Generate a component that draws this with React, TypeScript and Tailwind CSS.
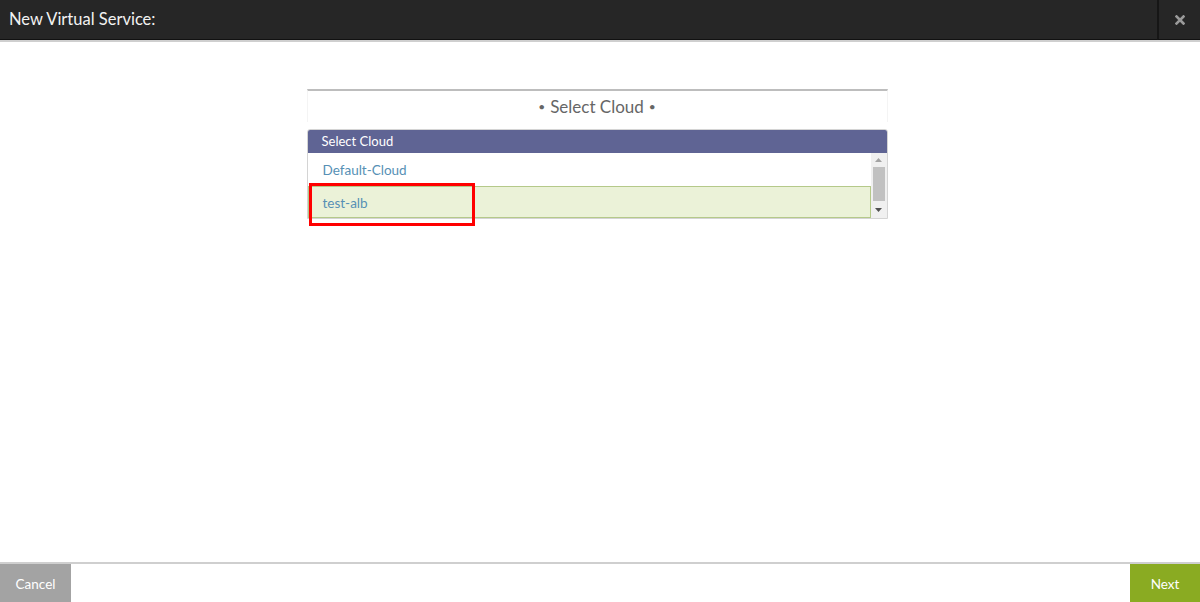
import React from "react";

export default function App() {
  return (
    <div
      className="relative flex h-[602px] w-[1200px] flex-col bg-white"
      style={{ fontFamily: "Lato, 'Open Sans', sans-serif" }}
    >
      {/* Header */}
      <div className="flex h-[42px] shrink-0 items-stretch border-b-2 border-b-[#cfcfcf] bg-[#262626]">
        <div className="flex flex-1 items-center border-b border-b-[#111] pl-[9px] text-[16.5px] text-[#f2f2f2]">
          New Virtual Service:
        </div>
        <div className="flex w-[43px] items-center justify-center border-b border-l-2 border-b-[#111] border-l-[#161616]">
          <svg width="10" height="10" viewBox="0 0 10 10">
            <path d="M1.5 1.5 L8.5 8.5 M8.5 1.5 L1.5 8.5" stroke="#9a9a9a" strokeWidth="2.6" strokeLinecap="square" />
          </svg>
        </div>
      </div>

      {/* Body */}
      <div className="flex flex-1 justify-center pr-[6px] pt-[47px]">
        <div className="flex w-[581px] flex-col">
          <div className="flex h-[33px] items-center justify-center gap-[5px] border-x border-t-2 border-x-[#f4f4f4] border-t-[#bdbdbd] text-[17px] text-[#666]">
            <span className="text-[12px]">•</span>
            <span>Select Cloud</span>
            <span className="text-[12px]">•</span>
          </div>
          <div className="mt-[7px] flex flex-col overflow-hidden rounded-t-[3px] border border-[#d4d4d4]">
            <div className="flex h-[23px] items-center bg-[#5f6494] pl-[14px] pt-[1px] text-[13px] text-white">
              Select Cloud
            </div>
            <div className="flex">
              <div className="flex flex-1 flex-col">
                <div className="flex h-[33px] items-center pl-[15px] pt-[2px] text-[13.5px] text-[#5690b5]">
                  Default-Cloud
                </div>
                <div className="flex h-[32px] items-center border border-[#b5c98a] bg-[#ebf2d8] pl-[14px] pt-[2px] text-[13.5px] text-[#5690b5]">
                  test-alb
                </div>
              </div>
              <div className="flex w-[16px] flex-col items-center bg-[#f0f0f0]">
                <div className="flex h-[14px] items-center justify-center">
                  <svg width="7" height="4" viewBox="0 0 7 4">
                    <path d="M0 4 L3.5 0 L7 4 Z" fill="#a3a3a3" />
                  </svg>
                </div>
                <div className="h-[34px] w-[12px] bg-[#c1c1c1]" />
                <div className="flex h-[17px] items-center justify-center">
                  <svg width="7" height="4" viewBox="0 0 7 4">
                    <path d="M0 0 L7 0 L3.5 4 Z" fill="#505050" />
                  </svg>
                </div>
              </div>
            </div>
          </div>
        </div>
      </div>

      {/* Red highlight */}
      <div className="pointer-events-none absolute left-[309px] top-[183px] h-[43px] w-[166px] border-[3px] border-[#ff0000]" />

      {/* Footer */}
      <div className="flex h-[40px] shrink-0 items-stretch justify-between border-t-2 border-t-[#cfcfcf]">
        <div className="flex w-[71px] items-center justify-center pt-[2px] bg-[#a3a3a3] text-[13.5px] text-white">
          Cancel
        </div>
        <div className="flex w-[70px] items-center justify-center pt-[2px] bg-[#8aab22] text-[13.5px] text-white">
          Next
        </div>
      </div>
    </div>
  );
}
